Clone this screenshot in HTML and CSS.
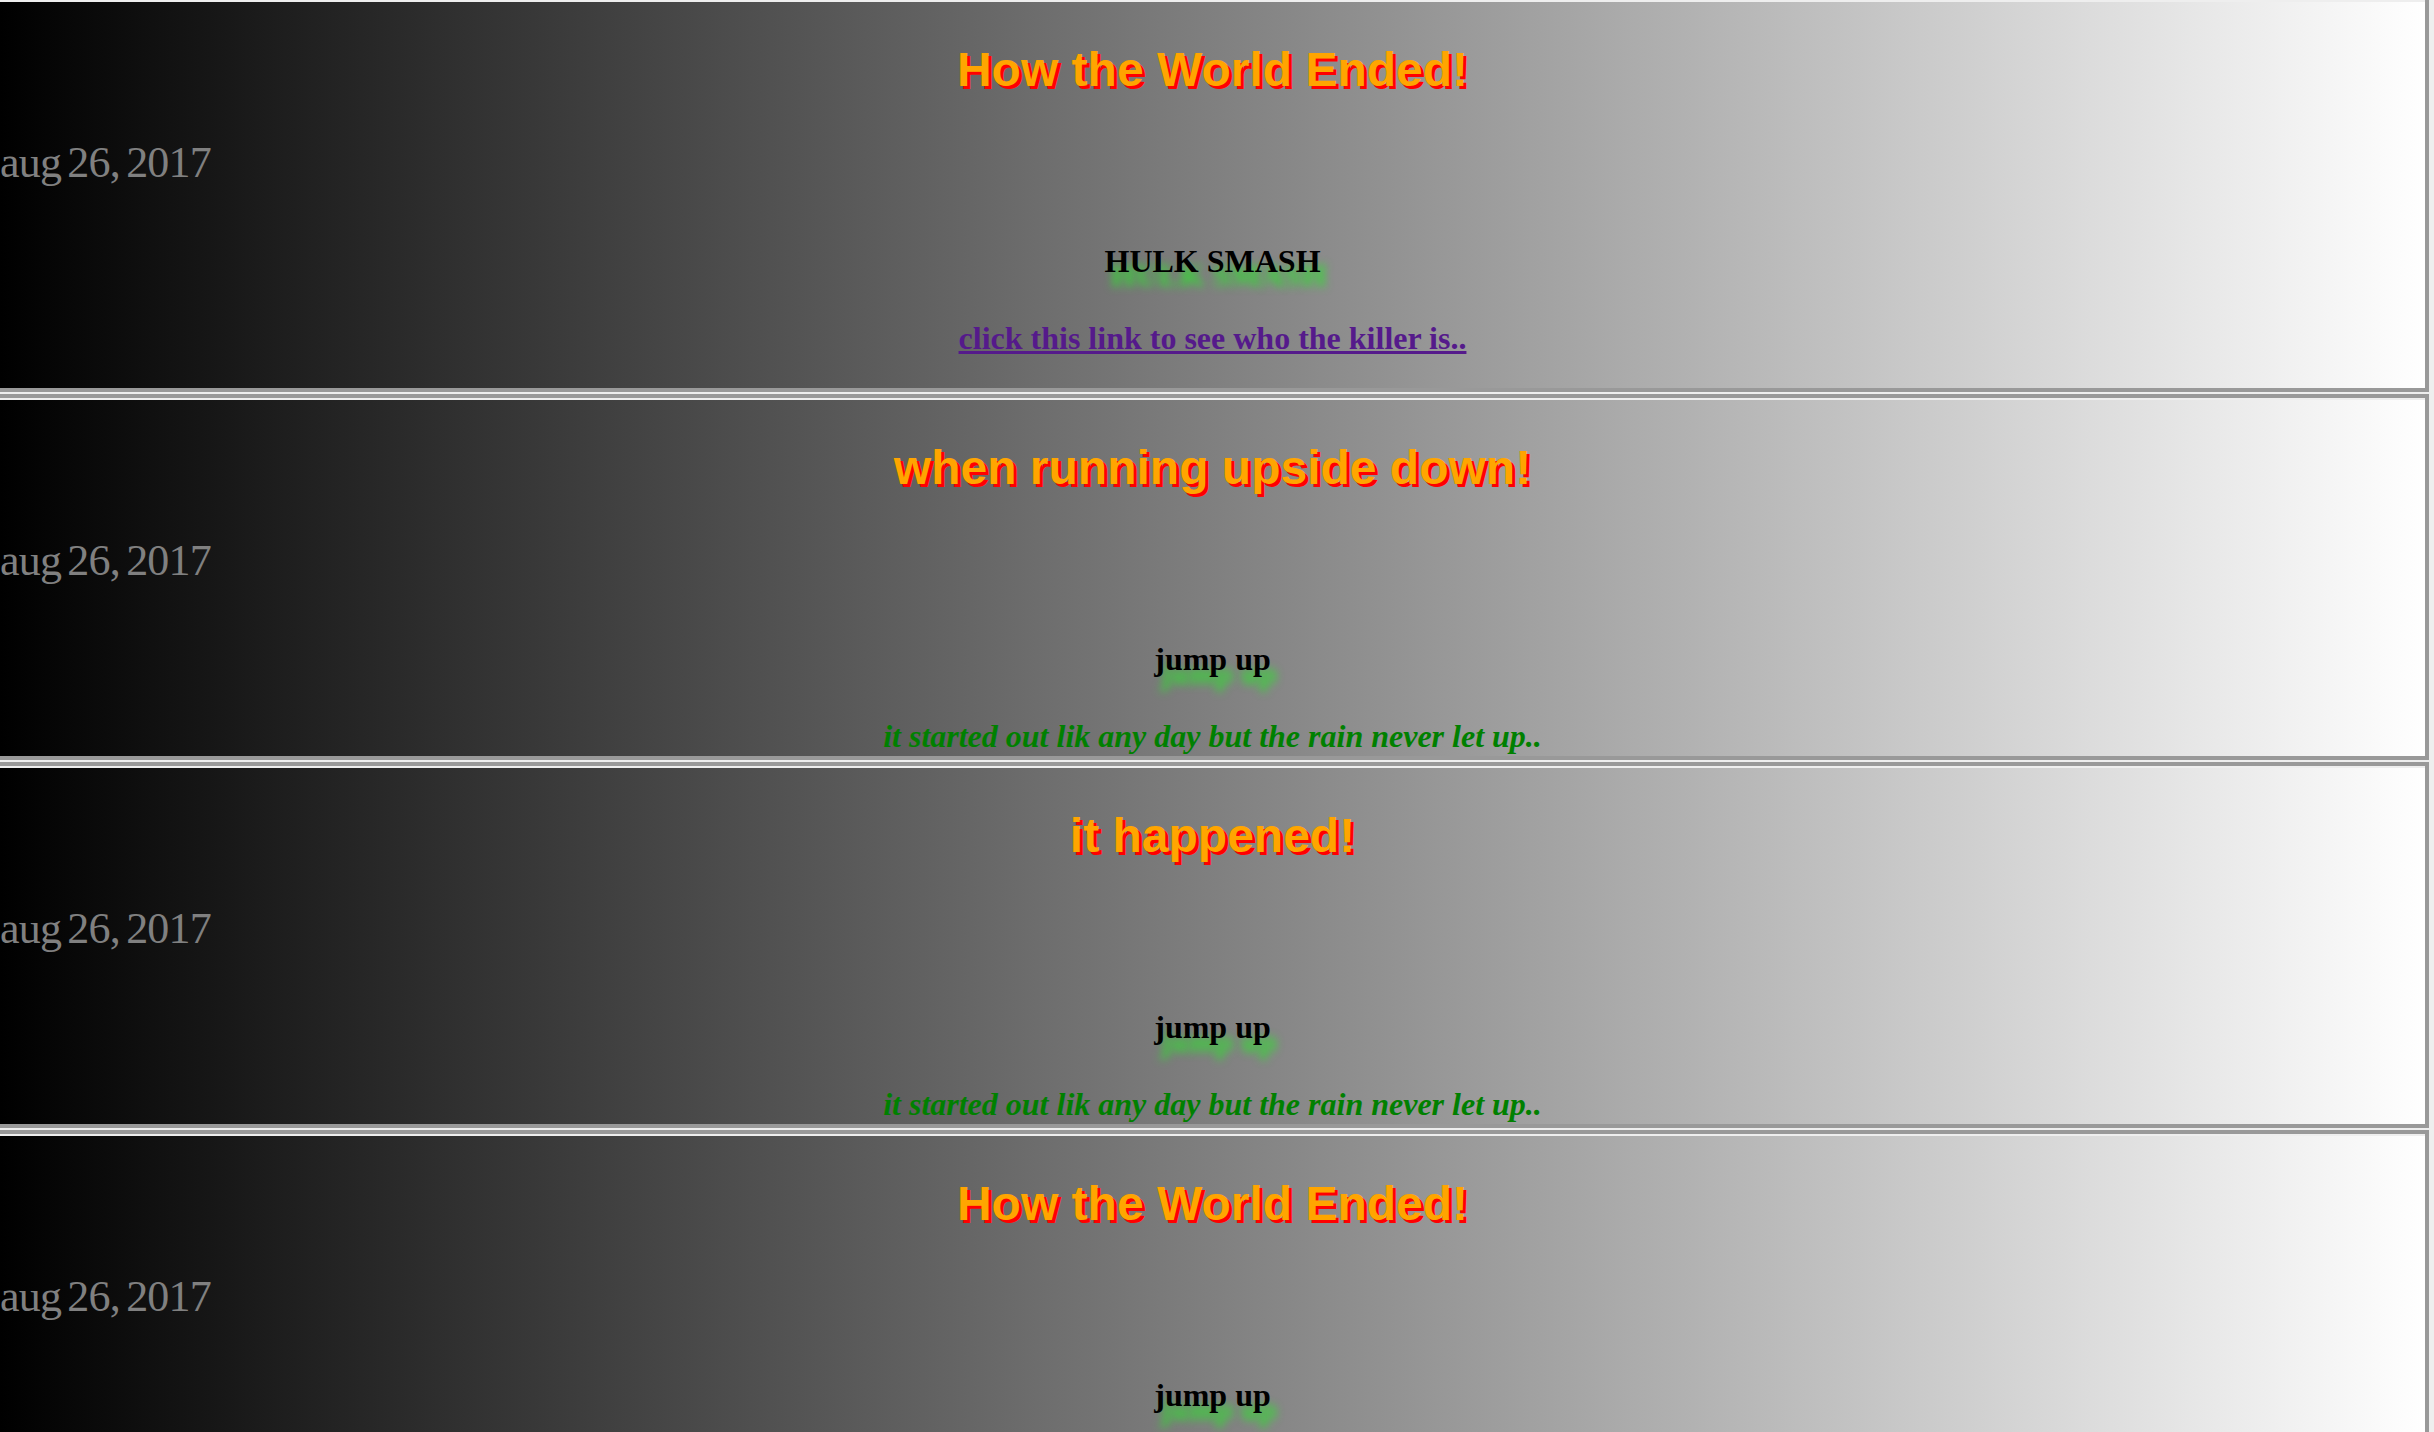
FILE: index.html
```html
<!DOCTYPE html>
<html lang="en">
<head>
<meta charset="utf-8">
<title>Stories</title>
<link rel="stylesheet" href="styles.css">
</head>
<body>
<div class="feed">
  <article class="post post-first">
    <div class="post-inner">
      <h1 class="post-title">How the World Ended!</h1>
      <p class="post-date">aug 26, 2017</p>
      <h3 class="post-tag">HULK SMASH</h3>
      <p class="post-line"><a class="post-link" href="#killer">click this link to see who the killer is..</a></p>
    </div>
  </article>
  <article class="post">
    <div class="post-inner">
      <h1 class="post-title">when running upside down!</h1>
      <p class="post-date">aug 26, 2017</p>
      <h3 class="post-tag">jump up</h3>
      <p class="post-line post-teaser">it started out lik any day but the rain never let up..</p>
    </div>
  </article>
  <article class="post">
    <div class="post-inner">
      <h1 class="post-title">it happened!</h1>
      <p class="post-date">aug 26, 2017</p>
      <h3 class="post-tag">jump up</h3>
      <p class="post-line post-teaser">it started out lik any day but the rain never let up..</p>
    </div>
  </article>
  <article class="post">
    <div class="post-inner">
      <h1 class="post-title">How the World Ended!</h1>
      <p class="post-date">aug 26, 2017</p>
      <h3 class="post-tag">jump up</h3>
      <p class="post-line post-teaser">it started out lik any day but the rain never let up..</p>
    </div>
  </article>
</div>
</body>
</html>
```
FILE: styles.css
```css
html, body {
  margin: 0;
  padding: 0;
}

body {
  background: #eeeeee;
  font-family: "Liberation Serif", "Times New Roman", serif;
  overflow: hidden;
}

.feed {
  display: flex;
  flex-direction: column;
  gap: 2px;
  margin-right: 5px;
}

.post {
  border: 4px solid #999999;
  border-left: 0;
}

.post-first {
  border-top: 0;
}

.post-inner {
  border-top: 2px solid #eeeeee;
  background: linear-gradient(to right, #000000, #ffffff);
  display: flex;
  flex-direction: column;
  padding-top: 40px;
  min-height: 316px;
}

.post-first .post-inner {
  padding-bottom: 30px;
}

.post-title {
  margin: 0;
  font-family: "Liberation Sans", Arial, sans-serif;
  font-weight: bold;
  font-size: 48px;
  line-height: 56px;
  color: #ffa500;
  text-align: center;
  text-shadow: 3px 3px 0 #ff0000;
}

.post-date {
  margin: 40px 0 0 0;
  font-family: "Liberation Serif", "Times New Roman", serif;
  font-size: 44px;
  line-height: 50px;
  letter-spacing: -0.8px;
  word-spacing: -4px;
  color: #808080;
  text-align: left;
}

.post-tag {
  margin: 53px 0 0 0;
  font-size: 32px;
  line-height: 40px;
  font-weight: bold;
  color: #000000;
  text-align: center;
  text-shadow: 6px 14px 8px #33dd33;
}

.post-line {
  margin: 37px 0 0 0;
  font-size: 32px;
  line-height: 40px;
  font-weight: bold;
  text-align: center;
}

.post-link {
  color: #551a8b;
  text-decoration: underline;
}

.post-teaser {
  color: #008000;
  font-style: italic;
}
```
